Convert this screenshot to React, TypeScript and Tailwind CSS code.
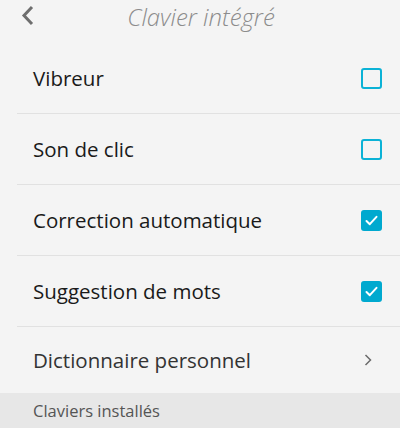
import React from "react";

interface RowProps {
  label: string;
  checked?: boolean;
}

function Checkbox({ checked }: { checked: boolean }) {
  if (checked) {
    return (
      <div className="w-[21px] h-[21px] rounded-[3px] bg-[#00a9cf] flex items-center justify-center">
        <svg width="15" height="15" viewBox="0 0 15 15" fill="none">
          <path d="M2.5 8 L5.8 11.2 L12.5 3.8" stroke="#ffffff" strokeWidth="2" strokeLinecap="round" strokeLinejoin="round" />
        </svg>
      </div>
    );
  }
  return <div className="w-[21px] h-[21px] rounded-[3px] border-2 border-[#0bb2d6]" />;
}

function SettingRow({ label, checked }: RowProps) {
  return (
    <div className="ml-[17px] h-[71px] flex items-center justify-between border-b border-[#e1e1e1] pl-4 pr-[18px]">
      <span className="text-[20.5px] text-[#1a1a1a]">{label}</span>
      <Checkbox checked={!!checked} />
    </div>
  );
}

export default function App() {
  return (
    <div className="w-[400px] h-[428px] overflow-hidden bg-[#f4f4f4]" style={{ fontFamily: '"Open Sans", "Noto Sans", sans-serif' }}>
      {/* Header */}
      <div className="relative h-[43px] flex items-start justify-center">
        <svg width="14" height="22" viewBox="0 0 14 22" fill="none" className="absolute left-[21px] top-[5px]">
          <path d="M11 2 L3 10.5 L11 19" stroke="#6e6e6e" strokeWidth="3" />
        </svg>
        <h1 className="text-[24px] leading-[33px] font-light italic text-[#8c8c8c] pl-[2px]">Clavier intégré</h1>
      </div>

      <SettingRow label="Vibreur" checked={false} />
      <SettingRow label="Son de clic" checked={false} />
      <SettingRow label="Correction automatique" checked />
      <SettingRow label="Suggestion de mots" checked />
      <div className="ml-[17px] h-[66px] flex items-center justify-between pl-4 pr-[18px]">
        <span className="text-[20.5px] text-[#333333]">Dictionnaire personnel</span>
        <svg width="8" height="12" viewBox="0 0 8 12" fill="none" className="mr-[10px]">
          <path d="M1.5 1 L6.5 6 L1.5 11" stroke="#6b6b6b" strokeWidth="1.5" />
        </svg>
      </div>

      {/* Section header */}
      <div className="h-[36px] bg-[#e7e7e7] pl-[33px] flex items-center">
        <span className="text-[16.5px] text-[#555555]">Claviers installés</span>
      </div>
    </div>
  );
}
